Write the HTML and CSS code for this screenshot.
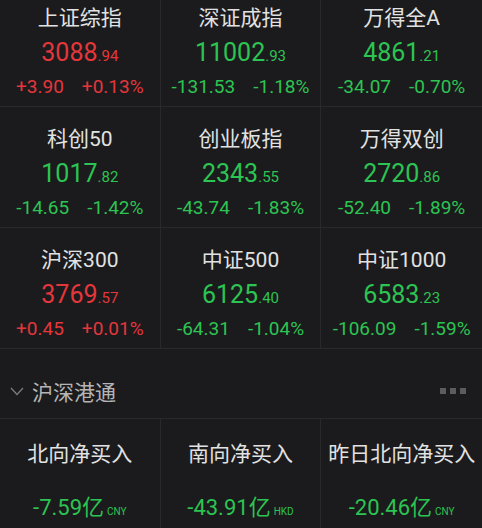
FILE: index.html
```html
<!DOCTYPE html>
<html lang="zh-CN">
<head>
  <meta charset="UTF-8" />
  <meta name="viewport" content="width=device-width, initial-scale=1.0"/>
  <title>指数行情</title>
  <link rel="stylesheet" href="styles.css">
</head>
<body>
  <div class="page">
    <div class="index-grid">
      <div class="cell">
        <div class="name">上证综指</div>
        <div class="value up">3088<span class="dec">.94</span></div>
        <div class="change up"><span>+3.90</span><span>+0.13%</span></div>
      </div>
      <div class="cell">
        <div class="name">深证成指</div>
        <div class="value down">11002<span class="dec">.93</span></div>
        <div class="change down"><span>-131.53</span><span>-1.18%</span></div>
      </div>
      <div class="cell">
        <div class="name">万得全A</div>
        <div class="value down">4861<span class="dec">.21</span></div>
        <div class="change down"><span>-34.07</span><span>-0.70%</span></div>
      </div>

      <div class="cell">
        <div class="name">科创50</div>
        <div class="value down">1017<span class="dec">.82</span></div>
        <div class="change down"><span>-14.65</span><span>-1.42%</span></div>
      </div>
      <div class="cell">
        <div class="name">创业板指</div>
        <div class="value down">2343<span class="dec">.55</span></div>
        <div class="change down"><span>-43.74</span><span>-1.83%</span></div>
      </div>
      <div class="cell">
        <div class="name">万得双创</div>
        <div class="value down">2720<span class="dec">.86</span></div>
        <div class="change down"><span>-52.40</span><span>-1.89%</span></div>
      </div>

      <div class="cell">
        <div class="name">沪深300</div>
        <div class="value up">3769<span class="dec">.57</span></div>
        <div class="change up"><span>+0.45</span><span>+0.01%</span></div>
      </div>
      <div class="cell">
        <div class="name">中证500</div>
        <div class="value down">6125<span class="dec">.40</span></div>
        <div class="change down"><span>-64.31</span><span>-1.04%</span></div>
      </div>
      <div class="cell">
        <div class="name">中证1000</div>
        <div class="value down">6583<span class="dec">.23</span></div>
        <div class="change down"><span>-106.09</span><span>-1.59%</span></div>
      </div>
    </div>

    <div class="section-head">
      <svg class="chevron" width="14" height="9" viewBox="0 0 14 9">
        <polyline points="1,1 7,7.5 13,1" fill="none" stroke="#7c7c7e" stroke-width="1.3"/>
      </svg>
      <span class="section-title">沪深港通</span>
      <div class="more"><i></i><i></i><i></i></div>
    </div>

    <div class="flow-grid">
      <div class="flow-cell">
        <div class="name">北向净买入</div>
        <div class="flow-value down">-7.59<span class="unit">亿</span><span class="cur">CNY</span></div>
      </div>
      <div class="flow-cell">
        <div class="name">南向净买入</div>
        <div class="flow-value down">-43.91<span class="unit">亿</span><span class="cur">HKD</span></div>
      </div>
      <div class="flow-cell">
        <div class="name">昨日北向净买入</div>
        <div class="flow-value down">-20.46<span class="unit">亿</span><span class="cur">CNY</span></div>
      </div>
    </div>
  </div>
</body>
</html>
```

FILE: styles.css
```css
body {
  margin: 0;
  background: #1b1b1d;
  font-family: Roboto, "Noto Sans CJK SC", sans-serif;
  color: #e4e4e4;
  overflow: hidden;
}

.page {
  margin-top: -14px;
}

.up {
  color: #e5363b;
}

.down {
  color: #2cc452;
}

.index-grid {
  display: grid;
  grid-template-columns: repeat(3, 1fr);
}

.cell {
  box-sizing: border-box;
  height: 121px;
  padding-top: 18px;
  display: flex;
  flex-direction: column;
  align-items: center;
  border-right: 1px solid #29292b;
  border-bottom: 1px solid #29292b;
  white-space: nowrap;
}

.cell:nth-child(3n) {
  border-right: none;
}

.name {
  font-size: 21px;
  line-height: 28px;
  color: #e2e2e2;
}

.value {
  margin-top: 6px;
  font-size: 25px;
  line-height: 30px;
}

.value .dec {
  font-size: 15px;
}

.change {
  margin-top: 4px;
  display: flex;
  gap: 18px;
  font-size: 19px;
  line-height: 24px;
}

.section-head {
  box-sizing: border-box;
  height: 69px;
  padding-top: 15px;
  display: flex;
  align-items: center;
}

.chevron {
  margin-left: 10px;
  margin-right: 8px;
}

.section-title {
  font-size: 21px;
  color: #b4b4b6;
}

.more {
  margin-left: auto;
  margin-right: 16px;
  display: flex;
  gap: 4px;
}

.more i {
  width: 6px;
  height: 6px;
  background: #5c5c5e;
}

.flow-grid {
  display: grid;
  grid-template-columns: repeat(3, 1fr);
  border-top: 1px solid #29292b;
}

.flow-cell {
  height: 130px;
  padding-top: 21px;
  box-sizing: border-box;
  display: flex;
  flex-direction: column;
  align-items: center;
  border-right: 1px solid #29292b;
  white-space: nowrap;
}

.flow-cell:last-child {
  border-right: none;
}

.flow-value {
  margin-top: 25px;
  font-size: 22px;
  line-height: 30px;
}

.flow-value .unit {
  font-size: 22px;
}

.flow-value .cur {
  margin-left: 3px;
  font-size: 10px;
}
```
